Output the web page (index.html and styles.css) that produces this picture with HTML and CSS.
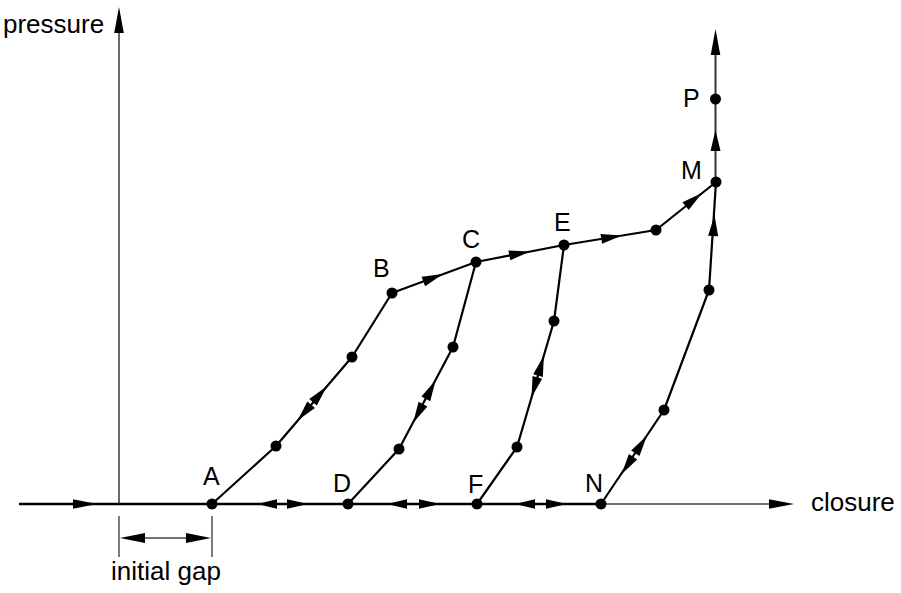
FILE: index.html
```html
<!DOCTYPE html>
<html>
<head>
<meta charset="utf-8">
<link rel="stylesheet" href="styles.css">
</head>
<body>
<div class="canvas">
<svg class="diagram" width="901" height="593" viewBox="0 0 901 593">
  <!-- axes -->
  <line class="axis-thin" x1="119" y1="504" x2="119" y2="20"/>
  <line class="axis-main" x1="19" y1="504" x2="602" y2="504"/>
  <line class="axis-thin" x1="602" y1="504" x2="780" y2="504"/>

  <!-- initial gap dimension -->
  <line class="dim" x1="119" y1="516" x2="119" y2="557"/>
  <line class="dim" x1="212" y1="516" x2="212" y2="557"/>
  <line class="dim" x1="125" y1="538" x2="206" y2="538"/>

  <!-- curves -->
  <polyline class="curve" points="212,504 276,446 352,357 392,293 476,262 564,245 656,230 716,182"/>
  <polyline class="curve" points="476,262 453,347 399,449 348,504"/>
  <polyline class="curve" points="564,245 554,321 517,447 477,504"/>
  <polyline class="curve" points="601,504 664,410 709,290 716,182"/>
  <line class="vert" x1="715.5" y1="182" x2="715.5" y2="40"/>

  <!-- axis arrowheads -->
  <polygon class="ah" points="0,0 -26,-4.8 -26,4.8" transform="translate(119,7) rotate(-90)"/>
  <polygon class="ah" points="0,0 -25,-4.8 -25,4.8" transform="translate(794,504)"/>
  <polygon class="ah" points="0,0 -24,-4.8 -24,4.8" transform="translate(97,504)"/>

  <!-- dimension arrowheads -->
  <polygon class="ah" points="0,0 -25,-5 -25,5" transform="translate(120,538) rotate(180)"/>
  <polygon class="ah" points="0,0 -25,-5 -25,5" transform="translate(211,538)"/>

  <!-- horizontal double arrows -->
  <polygon class="ah" points="0,0 -20,-4.8 -20,4.8" transform="translate(257,504) rotate(180)"/>
  <polygon class="ah" points="0,0 -21,-4.8 -21,4.8" transform="translate(308,504)"/>
  <polygon class="ah" points="0,0 -20,-4.8 -20,4.8" transform="translate(387,504) rotate(180)"/>
  <polygon class="ah" points="0,0 -21,-4.8 -21,4.8" transform="translate(440,504)"/>
  <polygon class="ah" points="0,0 -20,-4.8 -20,4.8" transform="translate(515,504) rotate(180)"/>
  <polygon class="ah" points="0,0 -21,-4.8 -21,4.8" transform="translate(567,504)"/>

  <!-- diagonal double arrows -->
  <polygon class="ah" points="0,0 -21,-5 -21,5" transform="translate(326.7,386.4) rotate(-49.4)"/>
  <polygon class="ah" points="0,0 -21,-5 -21,5" transform="translate(297.5,420.6) rotate(130.6)"/>
  <polygon class="ah" points="0,0 -21,-5 -21,5" transform="translate(435.6,380.3) rotate(-62.2)"/>
  <polygon class="ah" points="0,0 -21,-5 -21,5" transform="translate(413.2,422.7) rotate(117.8)"/>
  <polygon class="ah" points="0,0 -21,-5 -21,5" transform="translate(543.9,355.4) rotate(-73.8)"/>
  <polygon class="ah" points="0,0 -21,-5 -21,5" transform="translate(531.5,397.6) rotate(106.2)"/>
  <polygon class="ah" points="0,0 -21,-5 -21,5" transform="translate(646.9,435.8) rotate(-56.5)"/>
  <polygon class="ah" points="0,0 -21,-5 -21,5" transform="translate(621.5,474.2) rotate(123.5)"/>

  <!-- single direction arrows -->
  <polygon class="ah" points="0,0 -21,-5 -21,5" transform="translate(443,274.1) rotate(-20.5)"/>
  <polygon class="ah" points="0,0 -21,-5 -21,5" transform="translate(530,251.5) rotate(-10.7)"/>
  <polygon class="ah" points="0,0 -21,-5 -21,5" transform="translate(622,235.5) rotate(-9.3)"/>
  <polygon class="ah" points="0,0 -21,-5 -21,5" transform="translate(702,193) rotate(-38.7)"/>
  <polygon class="ah" points="0,0 -21,-5 -21,5" transform="translate(714.5,215) rotate(-86.3)"/>
  <polygon class="ah" points="0,0 -21,-5 -21,5" transform="translate(715.5,130) rotate(-90)"/>
  <polygon class="ah" points="0,0 -26,-4.8 -26,4.8" transform="translate(715.5,29) rotate(-90)"/>

  <!-- points -->
  <circle class="pt" cx="212" cy="504" r="5.5"/>
  <circle class="pt" cx="276" cy="446" r="5.5"/>
  <circle class="pt" cx="352" cy="357" r="5.5"/>
  <circle class="pt" cx="392" cy="293" r="5.5"/>
  <circle class="pt" cx="476" cy="262" r="5.5"/>
  <circle class="pt" cx="453" cy="347" r="5.5"/>
  <circle class="pt" cx="399" cy="449" r="5.5"/>
  <circle class="pt" cx="348" cy="504" r="5.5"/>
  <circle class="pt" cx="564" cy="245" r="5.5"/>
  <circle class="pt" cx="554" cy="321" r="5.5"/>
  <circle class="pt" cx="517" cy="447" r="5.5"/>
  <circle class="pt" cx="477" cy="504" r="5.5"/>
  <circle class="pt" cx="656" cy="230" r="5.5"/>
  <circle class="pt" cx="716" cy="182" r="5.5"/>
  <circle class="pt" cx="715.5" cy="99" r="5.5"/>
  <circle class="pt" cx="709" cy="290" r="5.5"/>
  <circle class="pt" cx="664" cy="410" r="5.5"/>
  <circle class="pt" cx="601" cy="504" r="5.5"/>

  <!-- labels -->
  <text class="axis-label" x="3" y="33">pressure</text>
  <text class="axis-label" x="811" y="511">closure</text>
  <text class="axis-label" x="111" y="580">initial gap</text>

  <text class="pt-label" x="203" y="485">A</text>
  <text class="pt-label" x="373" y="277">B</text>
  <text class="pt-label" x="462" y="248">C</text>
  <text class="pt-label" x="333" y="492">D</text>
  <text class="pt-label" x="554" y="231">E</text>
  <text class="pt-label" x="468" y="493">F</text>
  <text class="pt-label" x="681" y="179">M</text>
  <text class="pt-label" x="585" y="492">N</text>
  <text class="pt-label" x="683" y="107">P</text>
</svg>
</div>
</body>
</html>
```
FILE: styles.css
```css
html, body {
  margin: 0;
  padding: 0;
  background: #ffffff;
}

.canvas {
  width: 901px;
  height: 593px;
  overflow: hidden;
}

.diagram {
  display: block;
}

.axis-main {
  stroke: #000000;
  stroke-width: 2.4;
}

.axis-thin {
  stroke: #444444;
  stroke-width: 1.6;
}

.dim {
  stroke: #444444;
  stroke-width: 1.4;
}

.curve {
  fill: none;
  stroke: #000000;
  stroke-width: 2.2;
  stroke-linejoin: round;
}

.vert {
  stroke: #333333;
  stroke-width: 2;
}

.ah {
  fill: #000000;
  stroke: none;
}

.pt {
  fill: #000000;
}

.axis-label {
  font-family: "Liberation Sans", Arial, sans-serif;
  font-size: 26px;
  fill: #000000;
}

.pt-label {
  font-family: "Liberation Sans", Arial, sans-serif;
  font-size: 25px;
  fill: #000000;
}
```
